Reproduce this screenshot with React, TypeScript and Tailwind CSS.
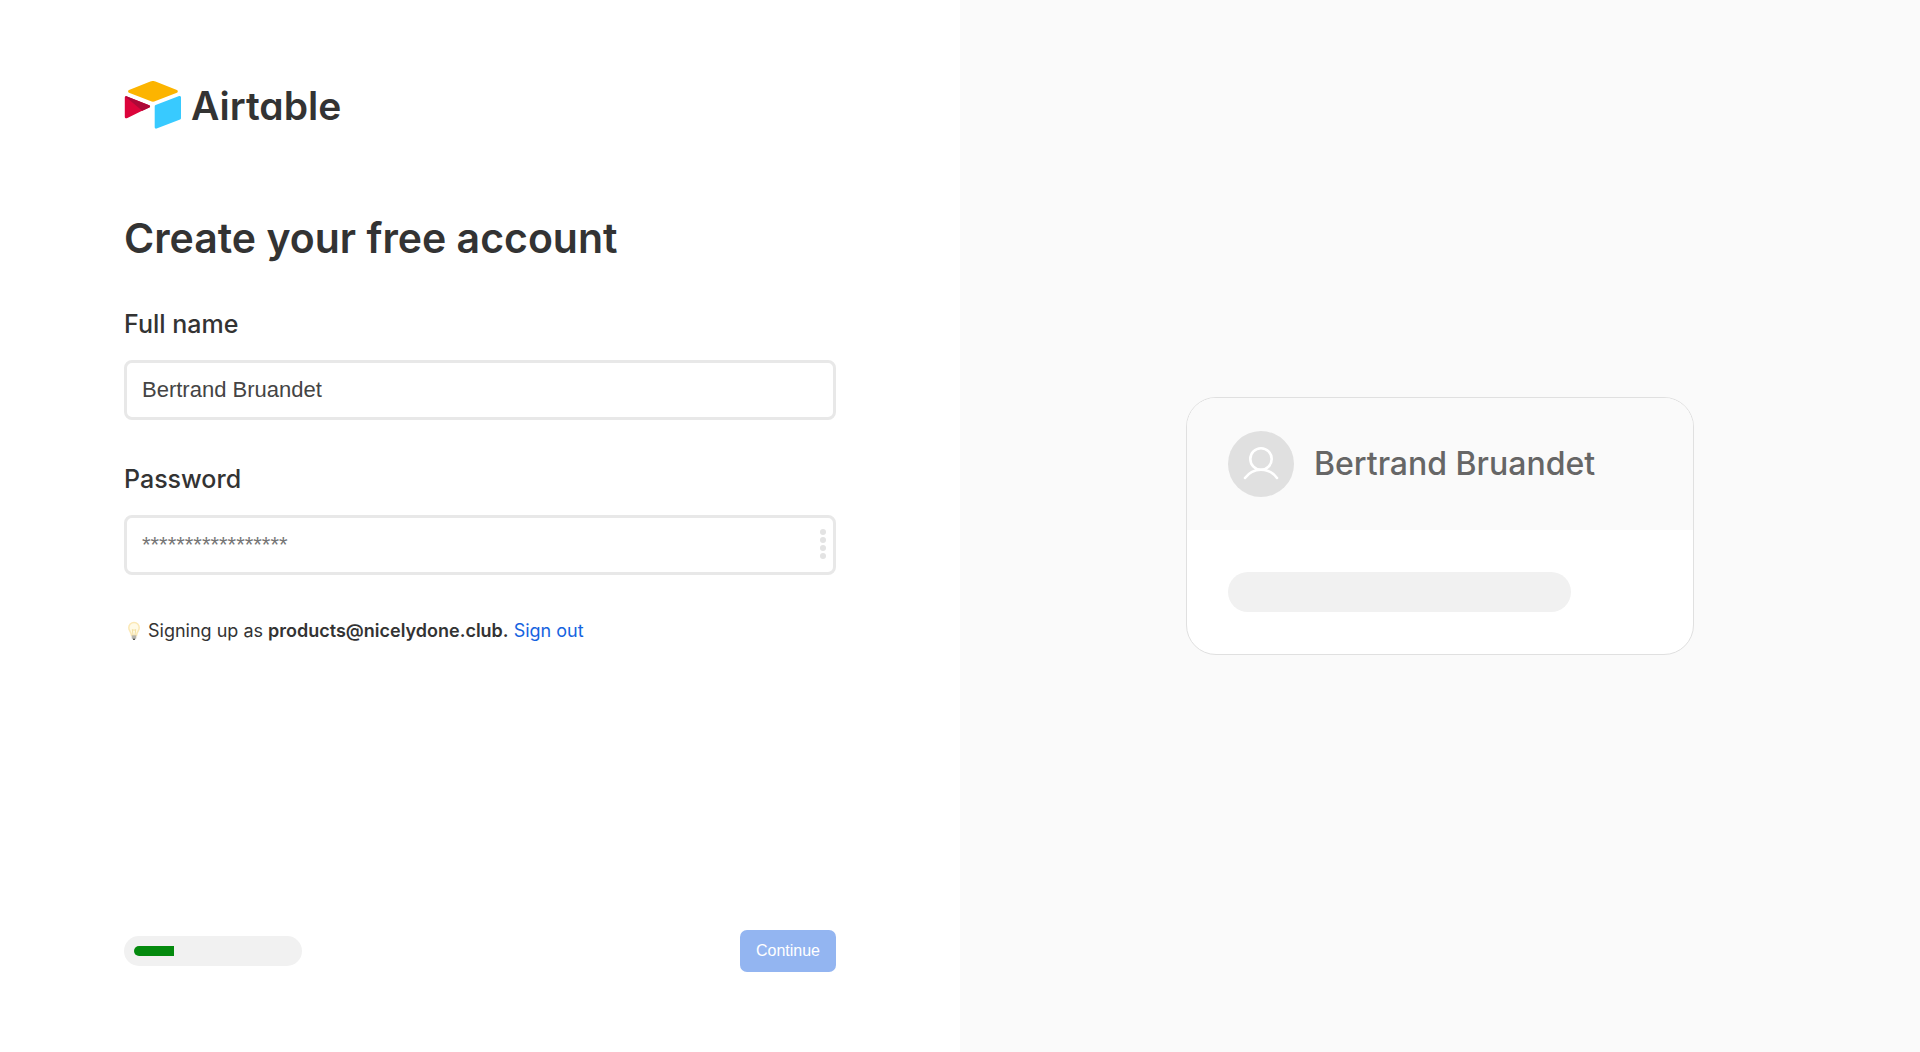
import { useState } from "react";

function AirtableMark() {
  return (
    <svg viewBox="0 0 57 48" className="-mt-0.5 h-12 w-[57px]" aria-hidden="true">
      <path
        d="M26.3.5 5 9.1c-1.2.5-1.2 2.1 0 2.6l21.4 8.4c1.7.7 3.5.7 5.1 0l21.4-8.4c1.2-.5 1.2-2.1 0-2.6L31.5.5c-1.7-.7-3.5-.7-5.2 0Z"
        fill="#fcb400"
      />
      <path
        d="M30.7 25.4v20.9c0 1 1 1.7 1.9 1.3l23.5-9.1c.5-.2.9-.7.9-1.3V16.3c0-1-1-1.7-1.9-1.3l-23.5 9.1c-.6.2-.9.7-.9 1.3Z"
        fill="#38caff"
      />
      <path
        d="m25.3 26.4-7 3.4-.7.3L2.9 37.2c-.9.5-2.1-.2-2.1-1.2V16.5c0-.4.2-.7.4-.9.6-.5 1.2-.4 1.8-.2l22.2 8.8c1.2.4 1.2 1.7.1 2.2Z"
        fill="#dc043b"
      />
      <path d="m25.3 26.4-7 3.4L1.2 15.6c.6-.5 1.2-.4 1.8-.2l22.2 8.8c1.2.4 1.2 1.7.1 2.2Z" fill="#ad0837" />
    </svg>
  );
}

function BulbIcon() {
  return (
    <svg viewBox="0 0 20 20" className="size-5 shrink-0" aria-hidden="true">
      <path
        d="M10 1.5a5.2 5.2 0 0 0-5.2 5.3c0 3.2 2.4 4 2.7 7.7h5c.3-3.7 2.7-4.5 2.7-7.7A5.2 5.2 0 0 0 10 1.5Z"
        fill="#fffae6"
        stroke="#fbe8b5"
        strokeWidth="1.5"
      />
      <path d="M9 14 8.3 8.5l1.7.8 1.7-.8L11 14" fill="none" stroke="#f3e0a2" strokeWidth="1" />
      <path d="M7.700 14.300h4.600v3.200H7.700Z" fill="#b8b6ae" />
      <path d="M8.500 17.500h3l-.7 1.500H9.200Z" fill="#4f4f4b" />
    </svg>
  );
}

function Avatar() {
  return (
    <div className="flex size-[66px] shrink-0 items-center justify-center rounded-full bg-[#e0e0e0]">
      <svg viewBox="0 0 36 36" className="size-9" fill="none" stroke="#fff" strokeWidth="2.600" strokeLinecap="round" aria-hidden="true">
        <circle cx="18" cy="13" r="10.700" />
        <path d="M2 32c4-5.500 9.500-8.300 16-8.300S30 26.500 34 32" />
      </svg>
    </div>
  );
}

const fieldClass =
  "block h-[60px] w-full rounded-lg border-3 border-[#e8e8e8] bg-white px-[15px] font-['Liberation_Sans',sans-serif] text-[22px] text-[#444] outline-none placeholder:text-[#757575] focus:border-[#2d7ff9]";

const labelClass = "block text-[25px] leading-8 font-medium";

export default function App() {
  const [name, setName] = useState("Bertrand Bruandet");
  const [password, setPassword] = useState("");

  return (
    <div className="grid min-h-screen grid-cols-2 bg-white font-['Inter',sans-serif] text-[#333]">
      <main className="flex flex-col px-[124px] py-20">
        <div className="flex items-center gap-2.5">
          <AirtableMark />
          <span className="text-[39px] leading-[52px] font-semibold [font-feature-settings:'cv11']">Airtable</span>
        </div>

        <form className="flex grow flex-col" onSubmit={(e) => e.preventDefault()}>
          <h1 className="mt-20 text-[41px] leading-[52px] font-semibold">Create your free account</h1>

          <label htmlFor="full-name" className={`${labelClass} mt-11`}>
            Full name
          </label>
          <input
            id="full-name"
            type="text"
            value={name}
            onChange={(e) => setName(e.target.value)}
            className={`${fieldClass} mt-5`}
          />

          <label htmlFor="password" className={`${labelClass} mt-[43px]`}>
            Password
          </label>
          <div className="relative mt-5">
            <input
              id="password"
              type="password"
              placeholder="*****************"
              value={password}
              onChange={(e) => setPassword(e.target.value)}
              className={fieldClass}
            />
            <div className="absolute inset-y-0 right-2.5 flex flex-col items-center justify-center gap-0.5 pb-0.5">
              <span className="size-1.5 rounded-full bg-[#e3e3e3]" />
              <span className="size-1.5 rounded-full bg-[#e3e3e3]" />
              <span className="size-1.5 rounded-full bg-[#e3e3e3]" />
              <span className="size-1.5 rounded-full bg-[#e3e3e3]" />
            </div>
          </div>

          <p className="mt-11 flex items-center gap-1 text-[18px] leading-6">
            <BulbIcon />
            <span>
              Signing up as <span className="font-semibold">products@nicelydone.club.</span>{" "}
              <a href="#sign-out" className="text-[#1663e0]">
                Sign out
              </a>
            </span>
          </p>

          <div className="mt-auto flex items-center justify-between">
            <div
              role="progressbar"
              aria-label="Sign-up progress"
              aria-valuenow={25}
              className="flex h-[30px] w-[178px] items-center rounded-full bg-[#f1f1f1] px-2.5"
            >
              <div className="h-2.5 w-1/4 rounded-l-full bg-[#048a0e]" />
            </div>
            <button
              type="submit"
              className="h-[42px] rounded-[7px] bg-[#93b5f1] px-4 font-['Liberation_Sans',sans-serif] text-base text-white"
            >
              Continue
            </button>
          </div>
        </form>
      </main>

      <aside className="flex items-center justify-center bg-[#fafafa]">
        <section className="w-[508px] overflow-hidden rounded-[30px] border border-[#e0e0e0] bg-white">
          <div className="flex items-center gap-5 bg-[#fafafa] px-[41px] py-[33px]">
            <Avatar />
            <p className="text-[32px] leading-10 font-medium whitespace-nowrap text-[#666]">{name}</p>
          </div>
          <div className="px-[41px] py-[42px]">
            <div className="h-10 w-[81%] rounded-full bg-[#f1f1f1]" />
          </div>
        </section>
      </aside>
    </div>
  );
}
